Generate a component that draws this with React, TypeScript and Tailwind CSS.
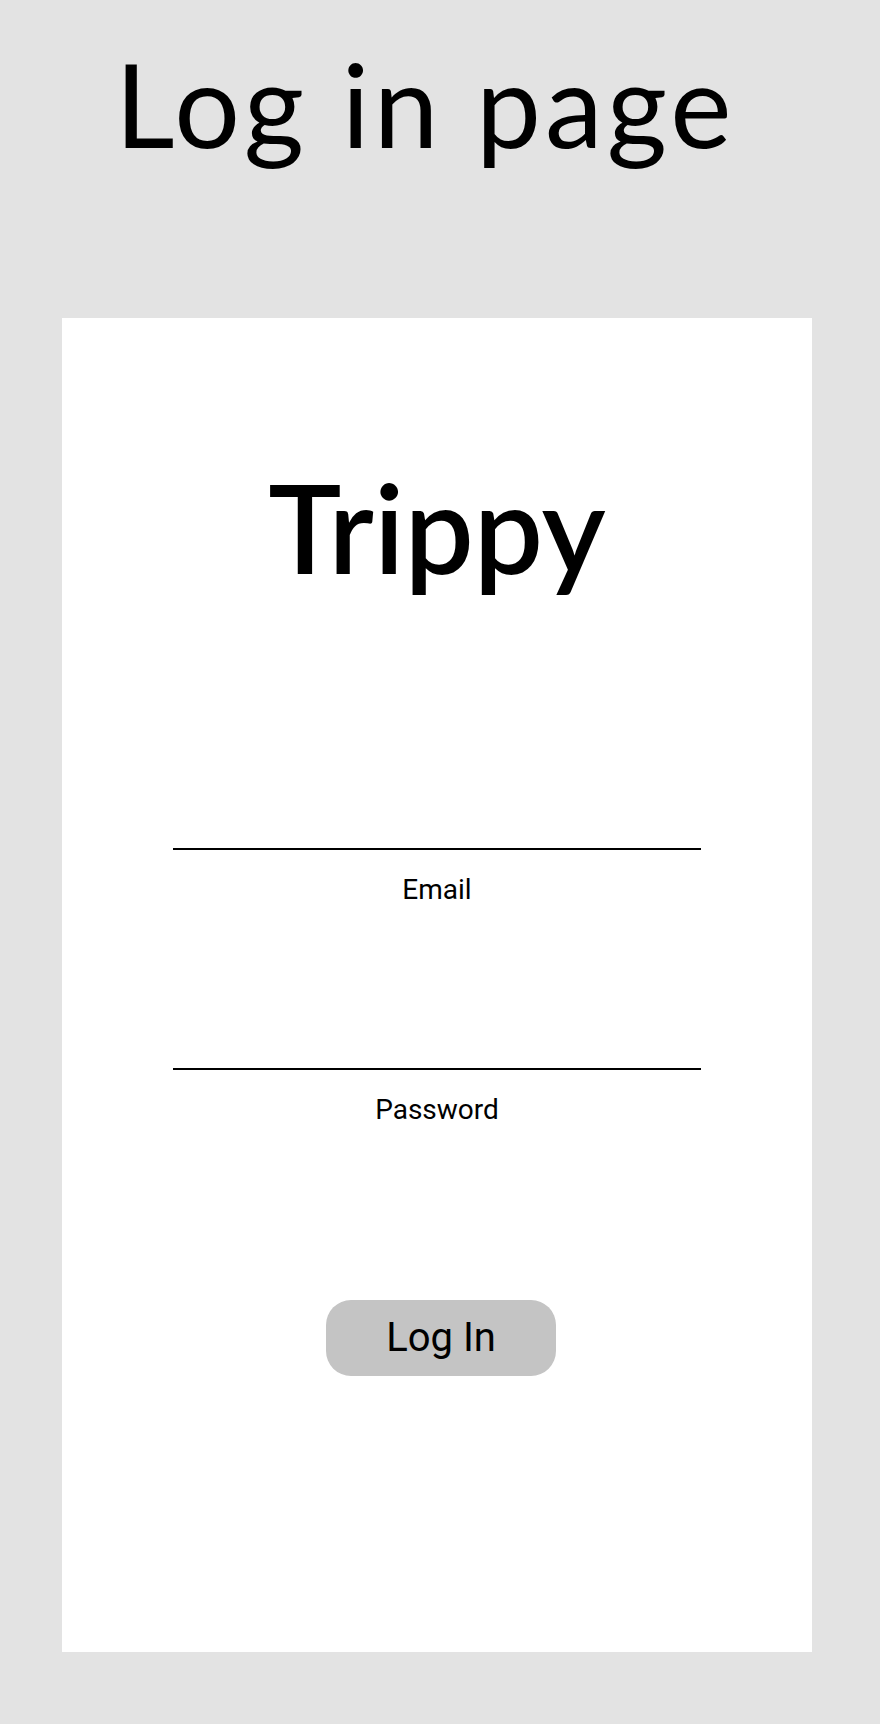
export default function App() {
  return (
    <div className="min-h-[1724px] w-full bg-[#e3e3e3] pt-[46px] font-['Lato',sans-serif] text-black">
      <h1 className="ml-[115px] text-[116px] leading-none font-normal tracking-[4px]">Log in page</h1>

      <div className="ml-[62px] mt-[156px] flex h-[1334px] w-[750px] flex-col items-center bg-white">
        <div className="mt-[147px] text-[123px] leading-none font-semibold">Trippy</div>

        <form className="flex flex-col items-center font-['Roboto',sans-serif]">
          <label className="mt-[222px] flex flex-col items-center">
            <input
              type="email"
              className="h-[40px] w-[528px] border-b-2 border-black bg-transparent outline-none"
            />
            <span className="mt-[26px] text-[28px] leading-none">Email</span>
          </label>

          <label className="mt-[126px] flex flex-col items-center">
            <input
              type="password"
              className="h-[40px] w-[528px] border-b-2 border-black bg-transparent outline-none"
            />
            <span className="mt-[26px] text-[28px] leading-none">Password</span>
          </label>

          <button
            type="button"
            className="ml-[8px] mt-[176px] flex h-[76px] w-[230px] items-center justify-center rounded-[25px] bg-[#c4c4c4] text-[40px] leading-none"
          >
            Log In
          </button>
        </form>
      </div>
    </div>
  );
}
